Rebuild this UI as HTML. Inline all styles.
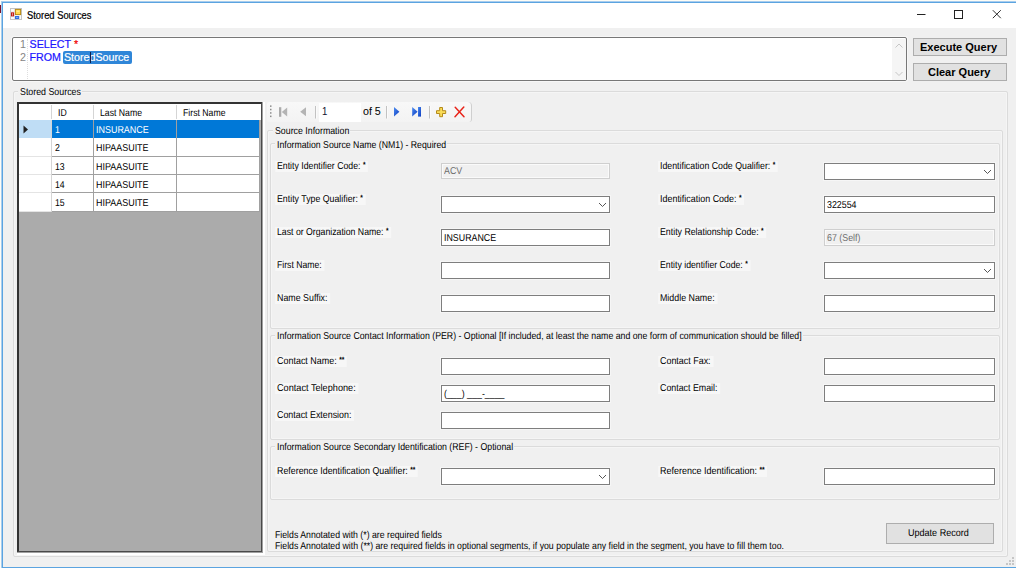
<!DOCTYPE html><html><head><meta charset="utf-8"><title>Stored Sources</title><style>
html,body{margin:0;padding:0}
body{width:1016px;height:570px;overflow:hidden;background:#fff;position:relative;font-family:"Liberation Sans",sans-serif;font-size:11px;color:#000}
div,span{position:absolute;box-sizing:border-box}
.t{white-space:nowrap;transform-origin:0 0;line-height:13px;height:13px}
.m{font-size:10px;transform:scaleX(.869);margin-top:1px;text-rendering:geometricPrecision}
.win{left:2px;top:2px;width:1016px;height:566px;border:1px solid #5ba4e0;background:#f0f0f0;box-shadow:0 0 0 1px #a9cdee}
.title{left:3px;top:3px;width:1013px;height:25px;background:#fff}
.gb{border:1px solid #dbdbdb;border-radius:2px;box-shadow:inset 0 0 0 1px #f5f5f5}
.gl{background:#f0f0f0;height:13px}
.tb{border:1px solid #7e7e7e;background:#fff;box-shadow:0 0 0 1px #f6f6f6}
.dis{border:1px solid #cfcfcf;background:#f0f0f0;box-shadow:inset 0 0 0 1px #fafafa}
.btn{border:1px solid #adadad;background:#e1e1e1}
.i{position:static}
.a{position:relative;top:-2px;font-size:7.5px;font-weight:bold}
</style></head><body>
<div style="left:0;top:0;width:1016px;height:2px;background:#fefdf6"></div>
<div style="left:0;top:0;width:2px;height:568px;background:#fefdf6"></div>
<div style="left:0;top:5px;width:2px;height:8px;background:#7a1028"></div>
<div class="win"></div>
<div class="title"></div>
<svg style="position:absolute;left:10px;top:8px" width="12" height="12" viewBox="0 0 12 12">
<rect x="0.5" y="0.5" width="11" height="11" fill="#fbfbfb" stroke="#c4c4c4" stroke-width="1"/>
<rect x="1" y="4.200" width="3.200" height="4.400" fill="#c01a14"/>
<rect x="2.200" y="5.200" width="0.800" height="2.400" fill="#f6b0a8"/>
<rect x="5.400" y="1.400" width="5.200" height="5.200" fill="#ffd84a" stroke="#b98a12" stroke-width="1"/>
<rect x="6.500" y="2.500" width="3" height="1.500" fill="#ffe98a"/>
<rect x="5" y="8" width="4.200" height="3" fill="#2f6fe0"/>
<rect x="6" y="9.200" width="2.200" height="0.700" fill="#9cc0f5"/>
<rect x="4.200" y="1" width="0.600" height="10" fill="#d8d8d8"/>
<rect x="1" y="3.600" width="3.200" height="0.600" fill="#dcdcdc"/>
<rect x="1" y="8.600" width="3.200" height="0.500" fill="#dcdcdc"/>
<rect x="9.300" y="7.600" width="0.500" height="3.400" fill="#dcdcdc"/>
</svg>
<span class="t seg" style="left:27px;top:8px;transform:scaleX(0.918);font-size:10.2px;line-height:15px;height:15px;-webkit-text-stroke:0.2px;">Stored Sources</span>
<svg style="position:absolute;left:900px;top:3px" width="116" height="25" viewBox="0 0 116 25">
<path d="M17 11.500h8.500" stroke="#222" stroke-width="1" fill="none"/>
<rect x="54.500" y="7.500" width="8" height="8" stroke="#222" stroke-width="1" fill="none"/>
<path d="M92.800 7.200l8 8M100.800 7.200l-8 8" stroke="#222" stroke-width="0.950" fill="none"/>
</svg>
<div style="left:12px;top:37px;width:895px;height:44px;background:#fff;border:1px solid #777;border-radius:2px;box-shadow:0 0 0 1px #f7f7f7"></div>
<div style="left:892px;top:39px;width:14px;height:41px;background:#f5f5f5"></div>
<svg style="position:absolute;left:891px;top:39px" width="16" height="41" viewBox="0 0 16 41">
<path d="M4.500 8.500l3.500-3.500l3.500 3.500" stroke="#c6c6c6" stroke-width="1" fill="none"/>
<path d="M4.500 33l3.500 3.500l3.500-3.500" stroke="#c6c6c6" stroke-width="1" fill="none"/>
</svg>
<div style="left:27px;top:39px;width:1px;height:40px;border-left:1px dotted #dedede"></div>
<div style="left:63px;top:51px;width:69px;height:13px;background:#2f86d8;border-radius:2px"></div>
<span class="t e" style="left:20px;top:38px;font-size:10.7px;line-height:13px;-webkit-text-stroke:0.2px;color:#858585;-webkit-text-stroke:0;">1</span>
<span class="t e" style="left:20px;top:51px;font-size:10.7px;line-height:13px;-webkit-text-stroke:0.2px;color:#858585;-webkit-text-stroke:0;">2</span>
<span class="t e" style="left:29.5px;top:38px;font-size:10.7px;line-height:13px;-webkit-text-stroke:0.2px;"><span style="position:static;color:#1a14ff">SELECT</span> <span style="position:static;color:#f00000">*</span></span>
<span class="t e" style="left:29.5px;top:51px;font-size:10.7px;line-height:13px;-webkit-text-stroke:0.2px;"><span style="position:static;color:#1a14ff">FROM</span> <span style="position:static;color:#fff">StoredSource</span></span>
<div style="left:90px;top:52px;width:1px;height:11px;background:#10204a"></div>
<div class="btn" style="left:913px;top:38px;width:94px;height:18px"></div>
<span class="t b" style="left:920px;top:41px;font-weight:bold;font-size:11px;">Execute Query</span>
<div class="btn" style="left:913px;top:63px;width:94px;height:18px"></div>
<span class="t b" style="left:928px;top:66px;font-weight:bold;font-size:11px;">Clear Query</span>
<div class="gb" style="left:13px;top:91px;width:995px;height:466px"></div>
<div class="gl" style="left:18px;top:86px;width:64px"></div>
<span class="t m" style="left:19.5px;top:85px;transform:scaleX(0.8834);">Stored Sources</span>
<div style="left:17px;top:102px;width:248px;height:453px;background:#fff"></div>
<div style="left:17px;top:102px;width:246px;height:451px;background:#a0a0a0"></div>
<div style="left:17px;top:102px;width:245px;height:450px;background:#ababab;border:2px solid #4a4a4a;border-width:2px 1px 1px 2px;border-top-color:#333;border-left-color:#333"></div>
<div style="left:19px;top:104px;width:242px;height:16px;background:#fff"></div>
<div style="left:51px;top:105px;width:1px;height:14px;background:#d5d5d5"></div>
<div style="left:93px;top:105px;width:1px;height:14px;background:#d5d5d5"></div>
<div style="left:176px;top:105px;width:1px;height:14px;background:#d5d5d5"></div>
<span class="t m" style="left:58px;top:106px;">ID</span>
<span class="t m" style="left:99.7px;top:106px;">Last Name</span>
<span class="t m" style="left:182.5px;top:106px;">First Name</span>
<div style="left:19px;top:120px;width:241px;height:18px;background:#0078d7;border-bottom:1px solid #0078d7"></div>
<div style="left:19px;top:120px;width:32px;height:18px;background:#bfddf5"></div>
<div style="left:51px;top:120px;width:1px;height:18px;background:#d5d5d5"></div>
<div style="left:93px;top:120px;width:1px;height:18px;background:#a0a0a0"></div>
<div style="left:176px;top:120px;width:1px;height:18px;background:#a0a0a0"></div>
<div style="left:259px;top:120px;width:1px;height:18px;background:#a0a0a0"></div>
<span class="t m" style="left:55px;top:123px;color:#fff;">1</span>
<span class="t m" style="left:96px;top:123px;transform:scaleX(0.895);color:#fff;">INSURANCE</span>
<div style="left:19px;top:138px;width:241px;height:19px;background:#fff;border-bottom:1px solid #a0a0a0"></div>
<div style="left:19px;top:138px;width:32px;height:18px;background:#fff"></div>
<div style="left:19px;top:156px;width:32px;height:1px;background:#e4e4e4"></div>
<div style="left:51px;top:138px;width:1px;height:19px;background:#d5d5d5"></div>
<div style="left:93px;top:138px;width:1px;height:19px;background:#a0a0a0"></div>
<div style="left:176px;top:138px;width:1px;height:19px;background:#a0a0a0"></div>
<div style="left:259px;top:138px;width:1px;height:19px;background:#a0a0a0"></div>
<span class="t m" style="left:55px;top:141px;">2</span>
<span class="t m" style="left:96px;top:141px;transform:scaleX(0.895);">HIPAASUITE</span>
<div style="left:19px;top:157px;width:241px;height:18px;background:#fff;border-bottom:1px solid #a0a0a0"></div>
<div style="left:19px;top:157px;width:32px;height:17px;background:#fff"></div>
<div style="left:19px;top:174px;width:32px;height:1px;background:#e4e4e4"></div>
<div style="left:51px;top:157px;width:1px;height:18px;background:#d5d5d5"></div>
<div style="left:93px;top:157px;width:1px;height:18px;background:#a0a0a0"></div>
<div style="left:176px;top:157px;width:1px;height:18px;background:#a0a0a0"></div>
<div style="left:259px;top:157px;width:1px;height:18px;background:#a0a0a0"></div>
<span class="t m" style="left:55px;top:160px;">13</span>
<span class="t m" style="left:96px;top:160px;transform:scaleX(0.895);">HIPAASUITE</span>
<div style="left:19px;top:175px;width:241px;height:18px;background:#fff;border-bottom:1px solid #a0a0a0"></div>
<div style="left:19px;top:175px;width:32px;height:17px;background:#fff"></div>
<div style="left:19px;top:192px;width:32px;height:1px;background:#e4e4e4"></div>
<div style="left:51px;top:175px;width:1px;height:18px;background:#d5d5d5"></div>
<div style="left:93px;top:175px;width:1px;height:18px;background:#a0a0a0"></div>
<div style="left:176px;top:175px;width:1px;height:18px;background:#a0a0a0"></div>
<div style="left:259px;top:175px;width:1px;height:18px;background:#a0a0a0"></div>
<span class="t m" style="left:55px;top:178px;">14</span>
<span class="t m" style="left:96px;top:178px;transform:scaleX(0.895);">HIPAASUITE</span>
<div style="left:19px;top:193px;width:241px;height:19px;background:#fff;border-bottom:1px solid #a0a0a0"></div>
<div style="left:19px;top:193px;width:32px;height:18px;background:#fff"></div>
<div style="left:19px;top:211px;width:32px;height:1px;background:#e4e4e4"></div>
<div style="left:51px;top:193px;width:1px;height:19px;background:#d5d5d5"></div>
<div style="left:93px;top:193px;width:1px;height:19px;background:#a0a0a0"></div>
<div style="left:176px;top:193px;width:1px;height:19px;background:#a0a0a0"></div>
<div style="left:259px;top:193px;width:1px;height:19px;background:#a0a0a0"></div>
<span class="t m" style="left:55px;top:196px;">15</span>
<span class="t m" style="left:96px;top:196px;transform:scaleX(0.895);">HIPAASUITE</span>
<svg style="position:absolute;left:23px;top:125px" width="6" height="9" viewBox="0 0 6 9"><path d="M0.500 0.500L5 4.500L0.500 8.500z" fill="#222"/></svg>
<div style="left:267px;top:102px;width:205px;height:20px;background:linear-gradient(#f8f8f8,#f3f3f3);border-radius:2px 4px 3px 2px;border-right:1px solid #cfcfcf"></div>
<svg style="position:absolute;left:267px;top:102px" width="206" height="20" viewBox="0 0 206 20">
<defs><linearGradient id="bl" x1="0" y1="0" x2="1" y2="1"><stop offset="0" stop-color="#4c8cf0"/><stop offset="1" stop-color="#0c3cc0"/></linearGradient></defs>
<g fill="#8c8c8c"><rect x="3" y="3.400" width="1.500" height="1.500"/><rect x="3" y="6.800" width="1.500" height="1.500"/><rect x="3" y="10.200" width="1.500" height="1.500"/><rect x="3" y="13.600" width="1.500" height="1.500"/></g>
<rect x="12" y="5.200" width="2.300" height="9.600" fill="#ababab"/><path d="M20.200 5.400v9.200l-5.400-4.600z" fill="#b4b4b4"/>
<path d="M39 5.200v9l-5.800-4.500z" fill="#b4b4b4"/>
<path d="M48.500 4v12.500" stroke="#c2c2c2"/><path d="M49.500 4v12.500" stroke="#fbfbfb"/>
<rect x="52" y="1" width="42" height="19" fill="#fff"/>
<path d="M119.500 4v12.500" stroke="#c2c2c2"/><path d="M120.500 4v12.500" stroke="#fbfbfb"/>
<path d="M127 5v9.400l5.400-4.700z" fill="url(#bl)"/>
<path d="M145.200 5v9.400l5.400-4.700z" fill="url(#bl)"/><rect x="151" y="5" width="3" height="9.600" fill="url(#bl)"/>
<path d="M162.500 4v12.500" stroke="#c2c2c2"/><path d="M163.500 4v12.500" stroke="#fbfbfb"/>
<path d="M172.700 5.500h2.800v3.200h3.200v2.800h-3.200v3.200h-2.800v-3.200h-3.200v-2.800h3.200z" fill="#f9dc58" stroke="#b48a1a" stroke-width="1"/>
<path d="M188.200 5.200l8.800 9.600M196.800 5l-8.800 9.800" stroke="#e8241a" stroke-width="1.500" stroke-linecap="round" fill="none"/>
</svg>
<span class="t seg" style="left:321.5px;top:104px;transform:scaleX(0.92);font-size:10.5px;line-height:14px;color:#101030;">1</span>
<span class="t seg" style="left:363.2px;top:104px;transform:scaleX(1.0162);font-size:10.5px;line-height:14px;">of 5</span>
<div class="gb" style="left:267px;top:130px;width:736px;height:422px"></div>
<div class="gl" style="left:273px;top:125px;width:77px"></div>
<span class="t m" style="left:274.6px;top:124px;transform:scaleX(0.8793);">Source Information</span>
<div class="gb" style="left:270px;top:143px;width:730px;height:186px"></div>
<div class="gl" style="left:275px;top:138px;width:172px"></div>
<span class="t m" style="left:276.7px;top:138px;transform:scaleX(0.8723);">Information Source Name (NM1) - Required</span>
<div class="gb" style="left:270px;top:335px;width:730px;height:105px"></div>
<div class="gl" style="left:275px;top:330px;width:528px"></div>
<span class="t m" style="left:276.7px;top:329px;transform:scaleX(0.8755);">Information Source Contact Information (PER) - Optional [If included, at least the name and one form of communication should be filled]</span>
<div class="gb" style="left:270px;top:446px;width:730px;height:54px"></div>
<div class="gl" style="left:275px;top:441px;width:239px"></div>
<span class="t m" style="left:276.7px;top:440px;transform:scaleX(0.8758);">Information Source Secondary Identification (REF) - Optional</span>
<span class="t m" style="left:277.0px;top:159px;transform:scaleX(0.8733)"><span class="i" style="background:#f7f7f7;padding:0 3px 0 2px;margin-left:-2px">Entity Identifier Code: <span class="a">*</span></span></span>
<span class="t m" style="left:660.2px;top:159px;transform:scaleX(0.878)"><span class="i" style="background:#f7f7f7;padding:0 3px 0 2px;margin-left:-2px">Identification Code Qualifier: <span class="a">*</span></span></span>
<span class="t m" style="left:277.0px;top:192px;transform:scaleX(0.8785)"><span class="i" style="background:#f7f7f7;padding:0 3px 0 2px;margin-left:-2px">Entity Type Qualifier: <span class="a">*</span></span></span>
<span class="t m" style="left:660.2px;top:192px;transform:scaleX(0.8934)"><span class="i" style="background:#f7f7f7;padding:0 3px 0 2px;margin-left:-2px">Identification Code: <span class="a">*</span></span></span>
<span class="t m" style="left:277.0px;top:225px;transform:scaleX(0.8709)"><span class="i" style="background:#f7f7f7;padding:0 3px 0 2px;margin-left:-2px">Last or Organization Name: <span class="a">*</span></span></span>
<span class="t m" style="left:660.2px;top:225px;transform:scaleX(0.878)"><span class="i" style="background:#f7f7f7;padding:0 3px 0 2px;margin-left:-2px">Entity Relationship Code: <span class="a">*</span></span></span>
<span class="t m" style="left:277.0px;top:258px;transform:scaleX(0.8631)"><span class="i" style="background:#f7f7f7;padding:0 3px 0 2px;margin-left:-2px">First Name:</span></span>
<span class="t m" style="left:660.2px;top:258px;transform:scaleX(0.871)"><span class="i" style="background:#f7f7f7;padding:0 3px 0 2px;margin-left:-2px">Entity identifier Code: <span class="a">*</span></span></span>
<span class="t m" style="left:277.0px;top:291px;transform:scaleX(0.885)"><span class="i" style="background:#f7f7f7;padding:0 3px 0 2px;margin-left:-2px">Name Suffix:</span></span>
<span class="t m" style="left:660.2px;top:291px;transform:scaleX(0.8849)"><span class="i" style="background:#f7f7f7;padding:0 3px 0 2px;margin-left:-2px">Middle Name:</span></span>
<div class="dis" style="left:441px;top:163px;width:169px;height:16px"></div>
<span class="t m" style="left:443.5px;top:164px;transform:scaleX(0.885);color:#6d6d6d;">ACV</span>
<div class="tb" style="left:441px;top:196px;width:169px;height:17px"></div>
<svg style="position:absolute;left:598px;top:202px" width="9" height="6" viewBox="0 0 9 6"><path d="M1 1L4.500 4.500L8 1" stroke="#555" stroke-width="1" fill="none"/></svg>
<div class="tb" style="left:441px;top:229px;width:169px;height:17px"></div>
<span class="t m" style="left:443.5px;top:231px;transform:scaleX(0.885);color:#000;">INSURANCE</span>
<div class="tb" style="left:441px;top:262px;width:169px;height:17px"></div>
<div class="tb" style="left:441px;top:295px;width:169px;height:17px"></div>
<div class="tb" style="left:824px;top:163px;width:171px;height:17px"></div>
<svg style="position:absolute;left:983px;top:169px" width="9" height="6" viewBox="0 0 9 6"><path d="M1 1L4.500 4.500L8 1" stroke="#555" stroke-width="1" fill="none"/></svg>
<div class="tb" style="left:824px;top:196px;width:171px;height:17px"></div>
<span class="t m" style="left:826.5px;top:198px;transform:scaleX(0.885);color:#000;">322554</span>
<div class="dis" style="left:824px;top:229px;width:171px;height:17px"></div>
<span class="t m" style="left:826.5px;top:231px;transform:scaleX(0.885);color:#6d6d6d;">67 (Self)</span>
<div class="tb" style="left:824px;top:262px;width:171px;height:17px"></div>
<svg style="position:absolute;left:983px;top:268px" width="9" height="6" viewBox="0 0 9 6"><path d="M1 1L4.500 4.500L8 1" stroke="#555" stroke-width="1" fill="none"/></svg>
<div class="tb" style="left:824px;top:295px;width:171px;height:17px"></div>
<span class="t m" style="left:276.7px;top:354px;transform:scaleX(0.895)"><span class="i" style="background:#f7f7f7;padding:0 3px 0 2px;margin-left:-2px">Contact Name: <span class="a">**</span></span></span>
<span class="t m" style="left:659.9px;top:354px;transform:scaleX(0.8924)"><span class="i" style="background:#f7f7f7;padding:0 3px 0 2px;margin-left:-2px">Contact Fax:</span></span>
<span class="t m" style="left:276.7px;top:381px;transform:scaleX(0.9151)"><span class="i" style="background:#f7f7f7;padding:0 3px 0 2px;margin-left:-2px">Contact Telephone:</span></span>
<span class="t m" style="left:659.9px;top:381px;transform:scaleX(0.8842)"><span class="i" style="background:#f7f7f7;padding:0 3px 0 2px;margin-left:-2px">Contact Email:</span></span>
<span class="t m" style="left:276.7px;top:408px;transform:scaleX(0.8864)"><span class="i" style="background:#f7f7f7;padding:0 3px 0 2px;margin-left:-2px">Contact Extension:</span></span>
<div class="tb" style="left:441px;top:358px;width:169px;height:17px"></div>
<div class="tb" style="left:441px;top:385px;width:169px;height:17px"></div>
<span class="t m" style="left:443.5px;top:387px;transform:scaleX(0.885);color:#000;">(___) ___-____</span>
<div class="tb" style="left:441px;top:412px;width:169px;height:17px"></div>
<div class="tb" style="left:824px;top:358px;width:171px;height:17px"></div>
<div class="tb" style="left:824px;top:385px;width:171px;height:17px"></div>
<span class="t m" style="left:277.0px;top:464px;transform:scaleX(0.8846)"><span class="i" style="background:#f7f7f7;padding:0 3px 0 2px;margin-left:-2px">Reference Identification Qualifier: <span class="a">**</span></span></span>
<span class="t m" style="left:660.2px;top:464px;transform:scaleX(0.8994)"><span class="i" style="background:#f7f7f7;padding:0 3px 0 2px;margin-left:-2px">Reference Identification: <span class="a">**</span></span></span>
<div class="tb" style="left:441px;top:468px;width:169px;height:17px"></div>
<svg style="position:absolute;left:598px;top:474px" width="9" height="6" viewBox="0 0 9 6"><path d="M1 1L4.500 4.500L8 1" stroke="#555" stroke-width="1" fill="none"/></svg>
<div class="tb" style="left:824px;top:468px;width:171px;height:17px"></div>
<span class="t m" style="left:274.8px;top:528px;transform:scaleX(0.8723);">Fields Annotated with (*) are required fields</span>
<span class="t m" style="left:274.8px;top:539px;transform:scaleX(0.8736);">Fields Annotated with (**) are required fields in optional segments, if you populate any field in the segment, you have to fill them too.</span>
<div class="btn" style="left:886px;top:523px;width:108px;height:21px"></div>
<span class="t m" style="left:908.4px;top:526px;transform:scaleX(0.9039);">Update Record</span>
<svg style="position:absolute;left:1003px;top:556px" width="12" height="11" viewBox="0 0 12 11">
<g fill="#c6c6c6"><rect x="9" y="1" width="2" height="2"/><rect x="6" y="4" width="2" height="2"/><rect x="9" y="4" width="2" height="2"/><rect x="3" y="7" width="2" height="2"/><rect x="6" y="7" width="2" height="2"/><rect x="9" y="7" width="2" height="2"/></g></svg>
<div style="left:0;top:568px;width:1016px;height:2px;background:#fff"></div>
</body></html>
